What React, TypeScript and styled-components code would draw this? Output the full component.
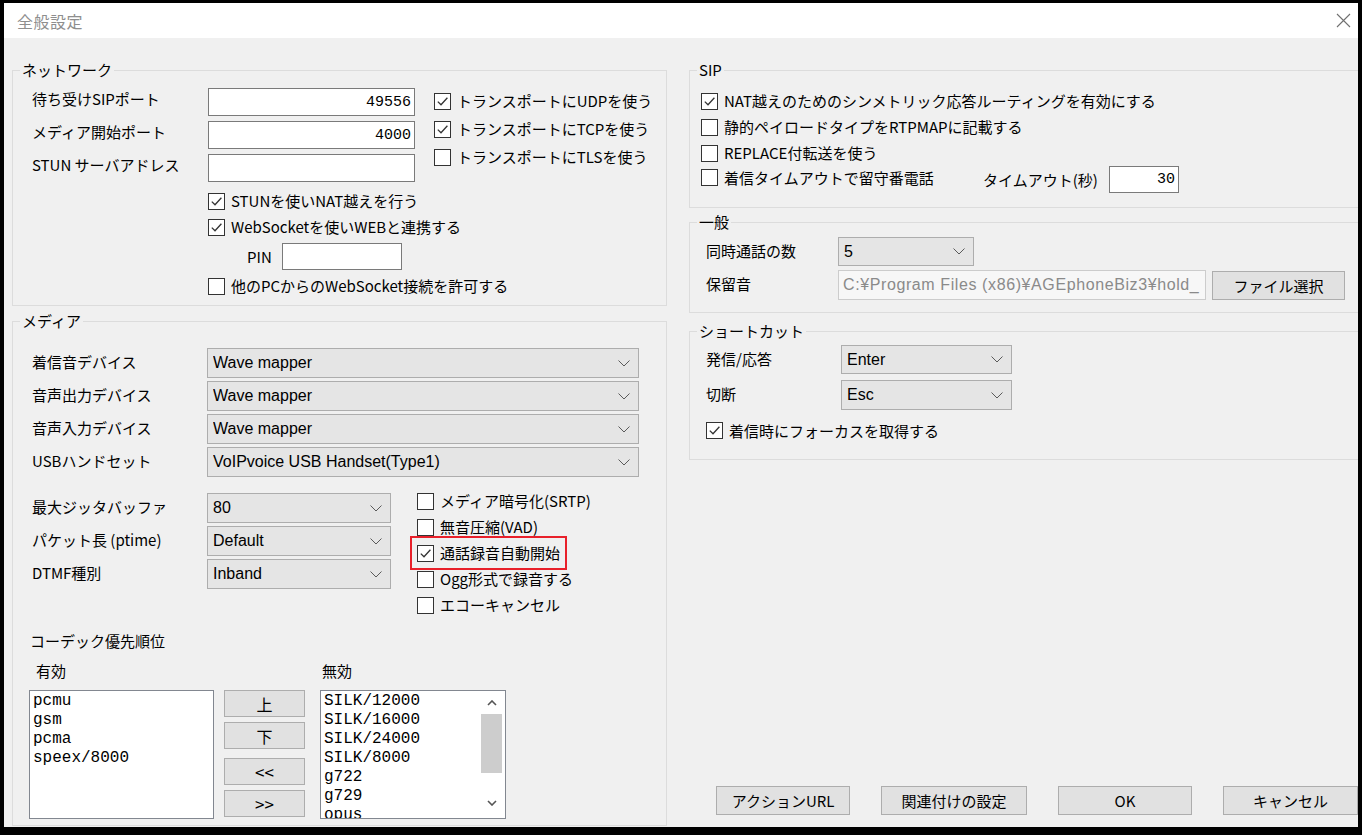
import React from "react";
import styled, { createGlobalStyle, css } from "styled-components";

const GlobalStyle = createGlobalStyle`
  html, body {
    margin: 0;
    padding: 0;
    background: #000;
  }
  body {
    font-family: "Noto Sans CJK JP", "Noto Sans", sans-serif;
    font-size: 15px;
    color: #000;
    overflow: hidden;
  }
`;

const Window = styled.div`
  width: 1354px;
  height: 824px;
  margin: 3px 0 0 4px;
  background: #f0f0f0;
  display: flex;
  flex-direction: column;
  overflow: hidden;
`;

const TitleBar = styled.div`
  flex: none;
  height: 35px;
  background: #fff;
  display: flex;
  align-items: center;
  justify-content: space-between;
  padding-left: 13px;
`;

const TitleText = styled.span`
  font-size: 16px;
  color: #8e8e8e;
  letter-spacing: 0.5px;
`;

const CloseBtn = styled.div`
  width: 30px;
  height: 35px;
  display: flex;
  align-items: center;
  justify-content: center;
`;

const Body = styled.div`
  flex: 1;
  min-height: 0;
  display: grid;
  grid-template-columns: 655px 673px;
  column-gap: 22px;
  padding: 22px 0 1px 8px;
`;

const Column = styled.div`
  display: flex;
  flex-direction: column;
  min-height: 0;
`;

const Group = styled.fieldset<{ $mt?: number; $grow?: boolean }>`
  margin: ${(p) => p.$mt ?? 0}px 0 0;
  padding: 0;
  border: 1px solid #dcdcdc;
  min-width: 0;
  ${(p) =>
    p.$grow &&
    css`
      flex: 1;
    `}
`;

const Legend = styled.legend`
  margin-left: 7px;
  padding: 0 2px;
  line-height: 20px;
  font-size: 15px;
`;

const FieldLabel = styled.span<{ $top?: boolean }>`
  line-height: 20px;
  white-space: nowrap;
  align-self: ${(p) => (p.$top ? "start" : "center")};
  margin-top: ${(p) => (p.$top ? "1px" : "-2px")};
`;

const Edit = styled.input<{ $w: number; $h?: number }>`
  box-sizing: border-box;
  width: ${(p) => p.$w}px;
  height: ${(p) => p.$h ?? 28}px;
  margin: 0;
  padding: 0 3px;
  border: 1px solid #7a7a7a;
  background: #fff;
  text-align: right;
  font-family: "Liberation Mono", monospace;
  font-size: 15px;
  color: #000;
  outline: none;
  flex: none;
`;

const PathField = styled.div`
  box-sizing: border-box;
  width: 368px;
  height: 30px;
  border: 1px solid #cccccc;
  background: #f7f7f7;
  color: #8a8a8a;
  padding: 0 4px;
  display: flex;
  align-items: center;
  overflow: hidden;
  white-space: nowrap;
  font-family: "Liberation Sans", Arial, sans-serif;
  font-size: 16px;
  letter-spacing: 0.6px;
`;

const Combo = styled.div<{ $w: number; $h?: number }>`
  box-sizing: border-box;
  width: ${(p) => p.$w}px;
  height: ${(p) => p.$h ?? 30}px;
  border: 1px solid #adadad;
  background: #e5e5e5;
  display: flex;
  align-items: center;
  padding: 0 8px 0 5px;
  font-family: "Liberation Sans", Arial, sans-serif;
  font-size: 16px;
`;

const ComboText = styled.span`
  flex: 1;
  white-space: nowrap;
  overflow: hidden;
`;

const PushButton = styled.button<{ $w: number; $h?: number; $fs?: number }>`
  box-sizing: border-box;
  width: ${(p) => p.$w}px;
  height: ${(p) => p.$h ?? 29}px;
  margin: 0;
  padding: 0;
  border: 1px solid #adadad;
  background: #e1e1e1;
  font-family: "Noto Sans CJK JP", "Noto Sans", sans-serif;
  font-size: ${(p) => p.$fs ?? 15}px;
  color: #000;
  flex: none;
`;

const CheckRow = styled.label<{ $hl?: boolean }>`
  display: inline-flex;
  align-items: center;
  gap: 6px;
  height: 20px;
  line-height: 20px;
  white-space: nowrap;
  align-self: flex-start;
  ${(p) =>
    p.$hl &&
    css`
      outline: 2px solid #e8202a;
      outline-offset: 5px;
    `}
`;

const Box = styled.span`
  flex: none;
  width: 17px;
  height: 17px;
  box-sizing: border-box;
  border: 1px solid #333;
  background: #fff;
  display: flex;
  align-items: center;
  justify-content: center;
`;

const CheckCol = styled.div<{ $gap: number; $ml?: number; $mt?: number }>`
  display: flex;
  flex-direction: column;
  gap: ${(p) => p.$gap}px;
  margin-left: ${(p) => p.$ml ?? 0}px;
  margin-top: ${(p) => p.$mt ?? 0}px;
`;

/* network */
const NetGrid = styled.div`
  display: grid;
  grid-template-columns: 176px 207px 1fr;
  row-gap: 5px;
  padding: 8px 0 9px 19px;
`;

const TransportCol = styled.div`
  grid-column: 3;
  grid-row: 1 / span 3;
  display: flex;
  flex-direction: column;
  gap: 8px;
  padding: 3px 0 0 19px;
`;

const NetLower = styled.div`
  grid-column: 2 / span 2;
  display: flex;
  flex-direction: column;
  gap: 6px;
  margin-top: 4px;
`;

const PinRow = styled.div`
  display: flex;
  align-items: center;
  gap: 10px;
  padding-left: 39px;
  height: 27px;
`;

/* media */
const MediaBody = styled.div`
  display: flex;
  flex-direction: column;
  padding: 17px 0 0 19px;
`;

const FormGrid = styled.div<{ $cols: string; $gap?: number }>`
  display: grid;
  grid-template-columns: ${(p) => p.$cols};
  row-gap: ${(p) => p.$gap ?? 3}px;
  align-items: center;
  justify-items: start;
`;

const JitterArea = styled.div`
  display: flex;
  align-items: flex-start;
  margin-top: 16px;
`;

const CodecTitle = styled.div`
  margin: 16px 0 0 -2px;
  line-height: 20px;
`;

const CodecHeads = styled.div`
  display: flex;
  margin: 10px 0 0 -3px;
  line-height: 20px;
`;

const HeadLabel = styled.span<{ $w: number; $pl: number }>`
  width: ${(p) => p.$w}px;
  padding-left: ${(p) => p.$pl}px;
  box-sizing: border-box;
`;

const CodecRow = styled.div`
  display: flex;
  align-items: flex-start;
  margin: 9px 0 0 -3px;
`;

const ListBox = styled.div<{ $w: number }>`
  box-sizing: border-box;
  width: ${(p) => p.$w}px;
  height: 129px;
  border: 1px solid #828790;
  background: #fff;
  display: flex;
  overflow: hidden;
`;

const ListItems = styled.div`
  flex: 1;
  padding: 1px 3px;
  font-family: "Liberation Mono", monospace;
  font-size: 16px;
  line-height: 19px;
  white-space: nowrap;
  overflow: hidden;
`;

const ScrollBar = styled.div`
  flex: none;
  width: 21px;
  margin-right: 3px;
  padding: 1px 0 4px;
  display: flex;
  flex-direction: column;
`;

const ArrowCell = styled.div`
  height: 22px;
  display: flex;
  align-items: center;
  justify-content: center;
`;

const Thumb = styled.div`
  height: 59px;
  background: #cdcdcd;
`;

const Spacer = styled.div`
  flex: 1;
`;

const MoveButtons = styled.div`
  display: flex;
  flex-direction: column;
  gap: 5px;
  margin: 0 15px 0 10px;
  & > :nth-child(3) {
    margin-top: 4px;
  }
`;

/* right side */
const SipBody = styled.div`
  display: flex;
  flex-direction: column;
  gap: 6px;
  padding: 11px 0 18px 11px;
`;

const TimeoutRow = styled.div`
  display: flex;
  align-items: center;
  height: 20px;
`;

const TimeoutCheck = styled.div`
  width: 282px;
`;

const InlineLabel = styled.span`
  width: 126px;
  white-space: nowrap;
`;

const GroupBody = styled.div<{ $pt: number; $pb: number }>`
  display: flex;
  flex-direction: column;
  padding: ${(p) => p.$pt}px 0 ${(p) => p.$pb}px 16px;
`;

const HoldRow = styled.div`
  display: flex;
  align-items: center;
  gap: 6px;
`;

const FocusCheck = styled.div`
  margin-top: 10px;
`;

const FootButtons = styled.div`
  margin-top: auto;
  margin-bottom: 11px;
  padding-left: 27px;
  display: flex;
  gap: 31px;
`;

const Chevron = () => (
  <svg width="12" height="7" viewBox="0 0 12 7">
    <polyline points="0.5,0.5 6,6 11.5,0.5" fill="none" stroke="#5a5a5a" strokeWidth="1" />
  </svg>
);

const ScrollArrow = ({ up }: { up?: boolean }) => (
  <svg width="10" height="6" viewBox="0 0 10 6">
    <polyline
      points={up ? "1,5 5,1 9,5" : "1,1 5,5 9,1"}
      fill="none"
      stroke="#555"
      strokeWidth="1.6"
    />
  </svg>
);

const Check = ({ label, checked, hl }: { label: string; checked?: boolean; hl?: boolean }) => (
  <CheckRow $hl={hl}>
    <Box>
      {checked && (
        <svg width="13" height="13" viewBox="0 0 13 13">
          <polyline points="1.8,6.6 5,9.8 11.4,2.8" fill="none" stroke="#333" strokeWidth="1.3" />
        </svg>
      )}
    </Box>
    {label}
  </CheckRow>
);

const Select = ({ value, w, h }: { value: string; w: number; h?: number }) => (
  <Combo $w={w} $h={h}>
    <ComboText>{value}</ComboText>
    <Chevron />
  </Combo>
);

const devices = [
  ["着信音デバイス", "Wave mapper"],
  ["音声出力デバイス", "Wave mapper"],
  ["音声入力デバイス", "Wave mapper"],
  ["USBハンドセット", "VoIPvoice USB Handset(Type1)"],
];

const mediaOpts = [
  ["最大ジッタバッファ", "80"],
  ["パケット長 (ptime)", "Default"],
  ["DTMF種別", "Inband"],
];

const enabledCodecs = ["pcmu", "gsm", "pcma", "speex/8000"];
const disabledCodecs = ["SILK/12000", "SILK/16000", "SILK/24000", "SILK/8000", "g722", "g729", "opus"];

const App = () => {
  return (
    <>
      <GlobalStyle />
      <Window>
        <TitleBar>
          <TitleText>全般設定</TitleText>
          <CloseBtn>
            <svg width="15" height="15" viewBox="0 0 15 15">
              <path d="M1 1 L14 14 M14 1 L1 14" stroke="#707070" strokeWidth="1.1" />
            </svg>
          </CloseBtn>
        </TitleBar>
        <Body>
          <Column>
            <Group>
              <Legend>ネットワーク</Legend>
              <NetGrid>
                <FieldLabel $top>待ち受けSIPポート</FieldLabel>
                <Edit $w={207} readOnly defaultValue="49556" />
                <TransportCol>
                  <Check checked label="トランスポートにUDPを使う" />
                  <Check checked label="トランスポートにTCPを使う" />
                  <Check label="トランスポートにTLSを使う" />
                </TransportCol>
                <FieldLabel $top>メディア開始ポート</FieldLabel>
                <Edit $w={207} readOnly defaultValue="4000" />
                <FieldLabel $top>STUN サーバアドレス</FieldLabel>
                <Edit $w={207} readOnly defaultValue="" />
                <NetLower>
                  <Check checked label="STUNを使いNAT越えを行う" />
                  <Check checked label="WebSocketを使いWEBと連携する" />
                  <PinRow>
                    <span>PIN</span>
                    <Edit $w={120} $h={27} readOnly defaultValue="" />
                  </PinRow>
                  <Check label="他のPCからのWebSocket接続を許可する" />
                </NetLower>
              </NetGrid>
            </Group>

            <Group $mt={5} $grow>
              <Legend>メディア</Legend>
              <MediaBody>
                <FormGrid $cols="175px 432px">
                  {devices.map(([l, v]) => (
                    <React.Fragment key={l}>
                      <FieldLabel>{l}</FieldLabel>
                      <Select w={432} value={v} />
                    </React.Fragment>
                  ))}
                </FormGrid>
                <JitterArea>
                  <FormGrid $cols="175px 184px">
                    {mediaOpts.map(([l, v]) => (
                      <React.Fragment key={l}>
                        <FieldLabel>{l}</FieldLabel>
                        <Select w={184} value={v} />
                      </React.Fragment>
                    ))}
                  </FormGrid>
                  <CheckCol $gap={6} $ml={26} $mt={-2}>
                    <Check label="メディア暗号化(SRTP)" />
                    <Check label="無音圧縮(VAD)" />
                    <Check checked hl label="通話録音自動開始" />
                    <Check label="Ogg形式で録音する" />
                    <Check label="エコーキャンセル" />
                  </CheckCol>
                </JitterArea>
                <CodecTitle>コーデック優先順位</CodecTitle>
                <CodecHeads>
                  <HeadLabel $w={291} $pl={7}>
                    有効
                  </HeadLabel>
                  <HeadLabel $w={186} $pl={2}>
                    無効
                  </HeadLabel>
                </CodecHeads>
                <CodecRow>
                  <ListBox $w={185}>
                    <ListItems>
                      {enabledCodecs.map((c) => (
                        <div key={c}>{c}</div>
                      ))}
                    </ListItems>
                  </ListBox>
                  <MoveButtons>
                    <PushButton $w={81} $h={27} $fs={16}>上</PushButton>
                    <PushButton $w={81} $h={27} $fs={16}>下</PushButton>
                    <PushButton $w={81} $h={27} $fs={17}>&lt;&lt;</PushButton>
                    <PushButton $w={81} $h={27} $fs={17}>&gt;&gt;</PushButton>
                  </MoveButtons>
                  <ListBox $w={186}>
                    <ListItems>
                      {disabledCodecs.map((c) => (
                        <div key={c}>{c}</div>
                      ))}
                    </ListItems>
                    <ScrollBar>
                      <ArrowCell>
                        <ScrollArrow up />
                      </ArrowCell>
                      <Thumb />
                      <Spacer />
                      <ArrowCell>
                        <ScrollArrow />
                      </ArrowCell>
                    </ScrollBar>
                  </ListBox>
                </CodecRow>
              </MediaBody>
            </Group>
          </Column>

          <Column>
            <Group>
              <Legend>SIP</Legend>
              <SipBody>
                <Check checked label="NAT越えのためのシンメトリック応答ルーティングを有効にする" />
                <Check label="静的ペイロードタイプをRTPMAPに記載する" />
                <Check label="REPLACE付転送を使う" />
                <TimeoutRow>
                  <TimeoutCheck>
                    <Check label="着信タイムアウトで留守番電話" />
                  </TimeoutCheck>
                  <InlineLabel>タイムアウト(秒)</InlineLabel>
                  <Edit $w={70} $h={27} readOnly defaultValue="30" />
                </TimeoutRow>
              </SipBody>
            </Group>

            <Group $mt={4}>
              <Legend>一般</Legend>
              <GroupBody $pt={5} $pb={12}>
                <FormGrid $cols="132px auto" $gap={4}>
                  <FieldLabel>同時通話の数</FieldLabel>
                  <Select w={136} h={29} value="5" />
                  <FieldLabel>保留音</FieldLabel>
                  <HoldRow>
                    <PathField>C:¥Program Files (x86)¥AGEphoneBiz3¥hold_</PathField>
                    <PushButton $w={133}>ファイル選択</PushButton>
                  </HoldRow>
                </FormGrid>
              </GroupBody>
            </Group>

            <Group $mt={8}>
              <Legend>ショートカット</Legend>
              <GroupBody $pt={4} $pb={18}>
                <FormGrid $cols="135px auto" $gap={6}>
                  <FieldLabel>発信/応答</FieldLabel>
                  <Select w={171} h={29} value="Enter" />
                  <FieldLabel>切断</FieldLabel>
                  <Select w={171} value="Esc" />
                </FormGrid>
                <FocusCheck>
                  <Check checked label="着信時にフォーカスを取得する" />
                </FocusCheck>
              </GroupBody>
            </Group>

            <FootButtons>
              <PushButton $w={134}>アクションURL</PushButton>
              <PushButton $w={146}>関連付けの設定</PushButton>
              <PushButton $w={134}>OK</PushButton>
              <PushButton $w={135}>キャンセル</PushButton>
            </FootButtons>
          </Column>
        </Body>
      </Window>
    </>
  );
};

export default App;
